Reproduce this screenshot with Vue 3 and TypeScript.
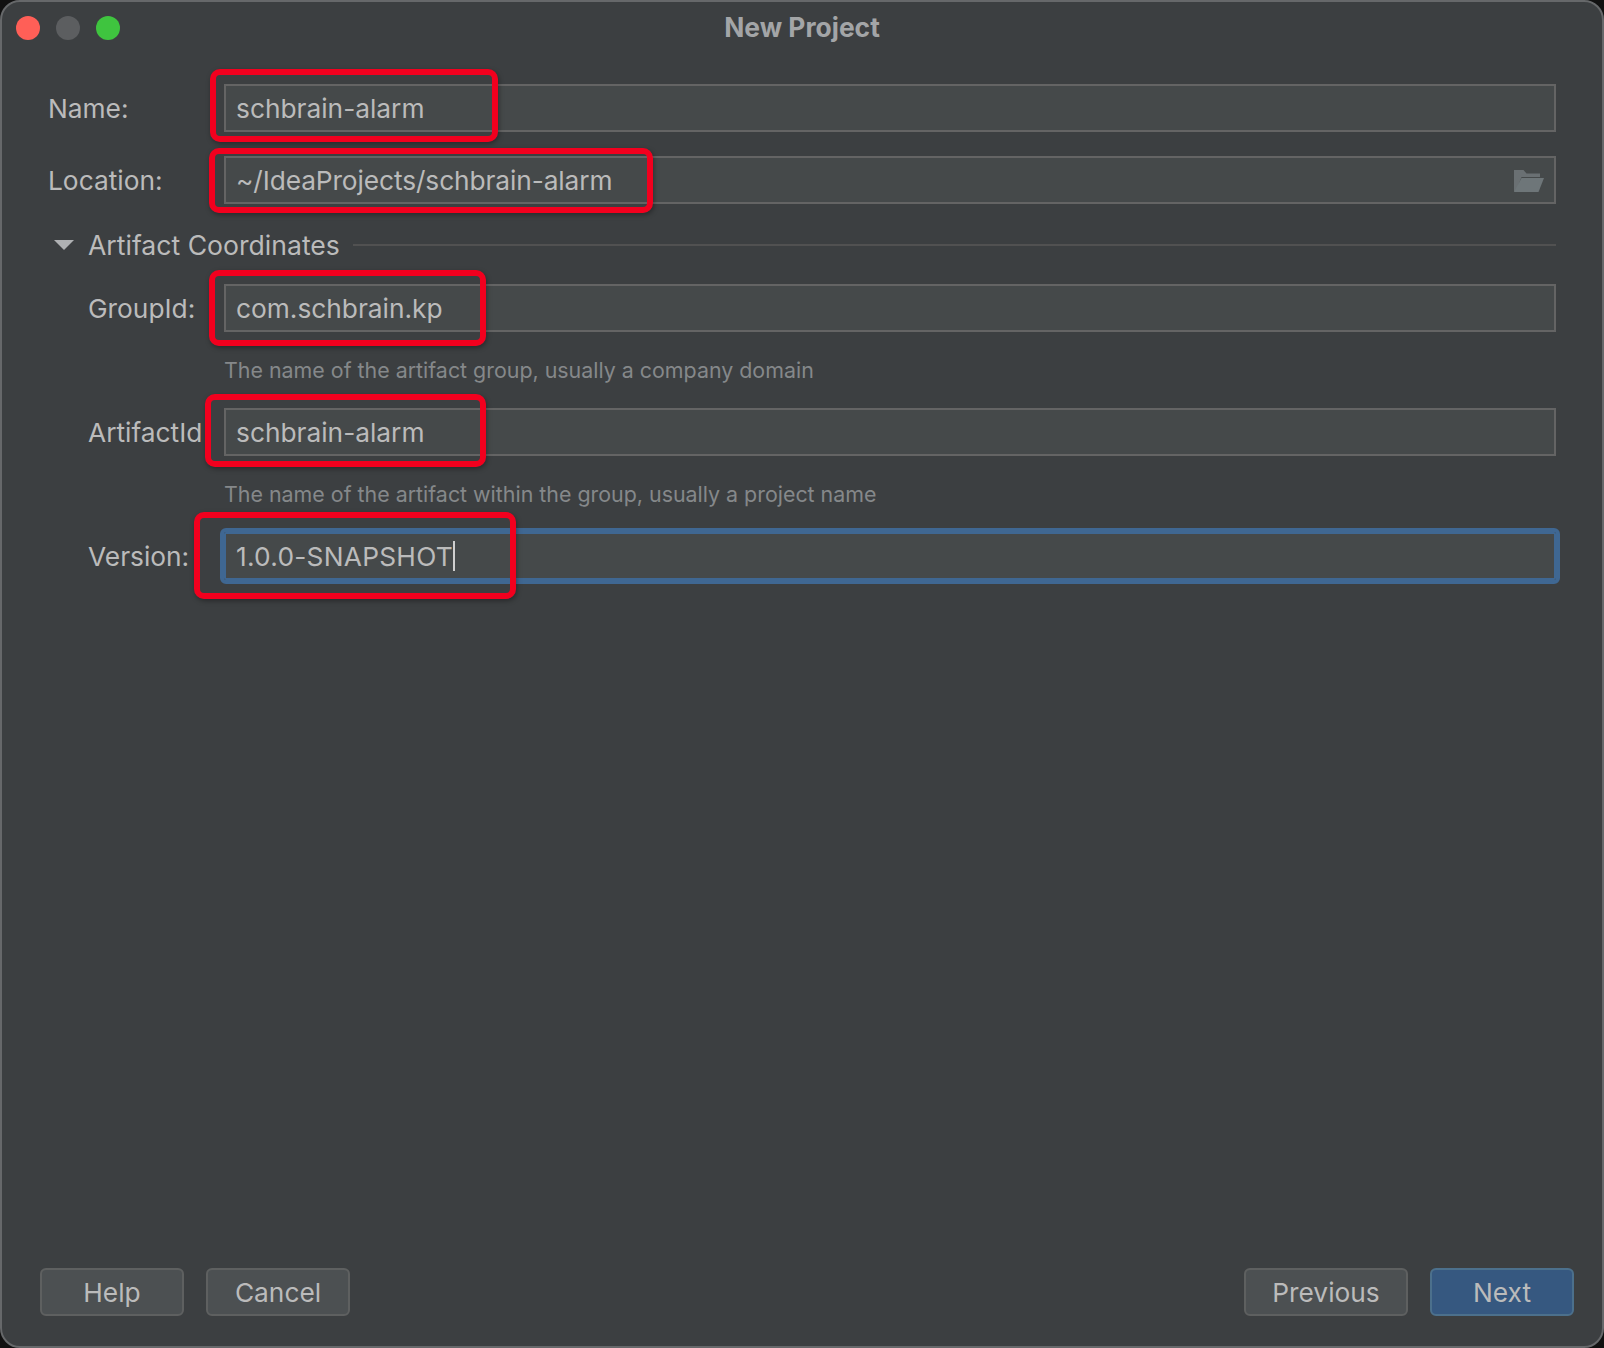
<script setup lang="ts">
interface Mark { cls: string }
const marks: Mark[] = [
  { cls: 'm-name' },
  { cls: 'm-location' },
  { cls: 'm-group' },
  { cls: 'm-artifact' },
  { cls: 'm-version' },
]
</script>

<template>
  <div class="window">
    <header class="titlebar">
      <div class="lights">
        <span class="light red"></span>
        <span class="light gray"></span>
        <span class="light green"></span>
      </div>
      <div class="title">New Project</div>
    </header>

    <main class="form">
      <div class="row top-row">
        <label class="label">Name:</label>
        <div class="input">schbrain-alarm</div>
      </div>
      <div class="row top-row">
        <label class="label">Location:</label>
        <div class="input">
          <span class="path">~/IdeaProjects/schbrain-alarm</span>
          <svg class="folder" width="30" height="22" viewBox="0 0 30 22">
            <path d="M0 0H9.5L12.5 3.5H26V7H7.5L2.5 20 L0 22Z" fill="#6a7073" />
            <path d="M7.5 8H30L24.5 22H0Z" fill="#6e7679" />
          </svg>
        </div>
      </div>

      <div class="section">
        <span class="tri"></span>
        <span class="section-title">Artifact Coordinates</span>
        <span class="section-line"></span>
      </div>

      <div class="row sub-row">
        <label class="label">GroupId:</label>
        <div class="input">com.schbrain.kp</div>
      </div>
      <div class="hint">The name of the artifact group, usually a company domain</div>
      <div class="row sub-row">
        <label class="label">ArtifactId</label>
        <div class="input">schbrain-alarm</div>
      </div>
      <div class="hint">The name of the artifact within the group, usually a project name</div>
      <div class="row sub-row">
        <label class="label">Version:</label>
        <div class="input focused"><span class="version">1.0.0-SNAPSHOT</span><span class="caret"></span></div>
      </div>
    </main>

    <footer class="footer">
      <div class="btns">
        <button class="btn">Help</button>
        <button class="btn">Cancel</button>
      </div>
      <div class="btns">
        <button class="btn wide">Previous</button>
        <button class="btn primary">Next</button>
      </div>
    </footer>

    <div v-for="m in marks" :key="m.cls" class="mark" :class="m.cls"></div>
  </div>
</template>

<style>
html, body { margin: 0; background: #111; }
</style>

<style scoped>
.window {
  position: relative;
  box-sizing: border-box;
  width: 1604px;
  height: 1348px;
  display: flex;
  flex-direction: column;
  background: #3c3f41;
  border: 2px solid #66686a;
  border-radius: 20px;
  font-family: Inter, "Noto Sans", sans-serif;
  font-size: 26.3px;
  color: #bbbbbb;
  overflow: hidden;
}
.titlebar {
  position: relative;
  height: 50px;
  margin-bottom: 4px;
  flex: none;
  display: flex;
  align-items: center;
  justify-content: center;
}
.lights {
  position: absolute;
  left: 14px;
  top: 14px;
  display: flex;
  gap: 16px;
}
.light { width: 24px; height: 24px; border-radius: 50%; }
.red { background: #ff5f57; }
.gray { background: #5c5e60; }
.green { background: #3fc43f; }
.title { font-size: 26.4px; font-weight: 700; color: #a3a5a7; }

.form {
  flex: 1;
  padding: 28px 46px 0 46px;
  display: flex;
  flex-direction: column;
}
.row { display: flex; align-items: center; }
.top-row { margin-bottom: 24px; }
.top-row .label { width: 176px; }
.sub-row .label { width: 136px; margin-left: 40px; white-space: nowrap; }
.label { flex: none; }
.input {
  position: relative;
  box-sizing: border-box;
  flex: 1;
  height: 48px;
  padding: 0 10px;
  display: flex;
  align-items: center;
  background: #45494a;
  border: 2px solid #646464;
  white-space: nowrap;
}
.input.focused {
  border-color: #3f6792;
  border-radius: 2px;
  outline: 4px solid #3f6792;
  outline-offset: 0;
}
.path { letter-spacing: -0.1px; }
.version { letter-spacing: 0.25px; }
.caret { width: 2px; height: 30px; background: #cfcfcf; margin-left: 0; }
.folder { position: absolute; right: 10px; top: 12px; }
.section {
  height: 32px;
  margin: 1px 0 23px;
  display: flex;
  align-items: center;
}
.tri {
  width: 0; height: 0;
  margin: 0 14px 0 6px;
  border-left: 10px solid transparent;
  border-right: 10px solid transparent;
  border-top: 10px solid #afb1b3;
}
.section-title { white-space: nowrap; font-size: 26.6px; }
.section-line { flex: 1; height: 2px; background: #515151; margin-left: 13px; }
.hint {
  margin: 0 0 0 176px;
  height: 76px;
  display: flex;
  align-items: center;
  font-size: 21.4px;
  color: #85888a;
}
.footer {
  flex: none;
  display: flex;
  justify-content: space-between;
  padding: 0 28px 30px 38px;
}
.btns { display: flex; gap: 22px; }
.btn {
  box-sizing: border-box;
  width: 144px;
  height: 48px;
  border: 2px solid #5e6060;
  border-radius: 6px;
  background: #4c5052;
  color: #bbbbbb;
  font-family: inherit;
  font-size: 26.3px;
  padding: 0;
}
.wide { width: 164px; }
.primary { background: #365880; border-color: #4c708c; }

.mark {
  position: absolute;
  box-sizing: border-box;
  border: 6px solid #f2001e;
  border-radius: 10px;
  box-shadow: 1px 2px 5px rgba(0,0,0,.35);
}
.m-name { left: 208px; top: 67px; width: 288px; height: 73px; }
.m-location { left: 207px; top: 146px; width: 444px; height: 65px; }
.m-group { left: 207px; top: 268px; width: 277px; height: 76px; }
.m-artifact { left: 203px; top: 392px; width: 281px; height: 73px; }
.m-version { left: 192px; top: 510px; width: 322px; height: 87px; }
</style>
